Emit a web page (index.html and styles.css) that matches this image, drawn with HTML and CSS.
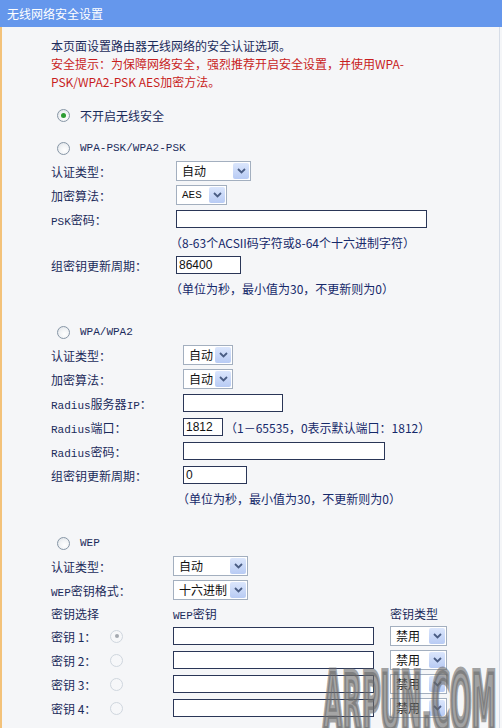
FILE: index.html
```html
<!DOCTYPE html>
<html lang="zh-CN">
<head>
<meta charset="utf-8">
<title>无线网络安全设置</title>
<link rel="stylesheet" href="styles.css">
</head>
<body>
<div class="title">无线网络安全设置</div>
<div class="panel">
  <div class="intro">
    <p>本页面设置路由器无线网络的安全认证选项。</p>
    <p class="warn">安全提示：为保障网络安全，强烈推荐开启安全设置，并使用WPA-<br>PSK/WPA2-PSK AES加密方法。</p>
  </div>

  <div class="option opt-first"><span class="radio checked"></span><span>不开启无线安全</span></div>
  <div class="option opt-second"><span class="radio"></span><span class="latin">WPA-PSK/WPA2-PSK</span></div>

  <div class="form form-psk">
    <div class="row"><span class="lbl">认证类型：</span>
      <span class="select w75"><span class="sel-text">自动</span><span class="sel-btn"><svg width="9" height="6" viewBox="0 0 9 6"><path d="M1 1 L4.5 4.5 L8 1" /></svg></span></span></div>
    <div class="row"><span class="lbl">加密算法：</span>
      <span class="select w51"><span class="sel-text latin">AES</span><span class="sel-btn"><svg width="9" height="6" viewBox="0 0 9 6"><path d="M1 1 L4.5 4.5 L8 1" /></svg></span></span></div>
    <div class="row"><span class="lbl"><span class="latin">PSK</span>密码：</span>
      <input class="field w251" type="text" value=""></div>
    <div class="hint">（8-63个ACSII码字符或8-64个十六进制字符）</div>
    <div class="row"><span class="lbl">组密钥更新周期：</span>
      <input class="field w65" type="text" value="86400"></div>
    <div class="hint">（单位为秒，最小值为30，不更新则为0）</div>
  </div>

  <div class="option opt-section"><span class="radio"></span><span class="latin">WPA/WPA2</span></div>

  <div class="form form-wpa">
    <div class="row"><span class="lbl">认证类型：</span>
      <span class="select w50"><span class="sel-text">自动</span><span class="sel-btn"><svg width="9" height="6" viewBox="0 0 9 6"><path d="M1 1 L4.5 4.5 L8 1" /></svg></span></span></div>
    <div class="row"><span class="lbl">加密算法：</span>
      <span class="select w50"><span class="sel-text">自动</span><span class="sel-btn"><svg width="9" height="6" viewBox="0 0 9 6"><path d="M1 1 L4.5 4.5 L8 1" /></svg></span></span></div>
    <div class="row"><span class="lbl"><span class="latin">Radius</span>服务器<span class="latin">IP</span>：</span>
      <input class="field w100" type="text" value=""></div>
    <div class="row"><span class="lbl"><span class="latin">Radius</span>端口：</span>
      <input class="field w40" type="text" value="1812"><span class="inline-hint">（1－65535，0表示默认端口：1812）</span></div>
    <div class="row"><span class="lbl"><span class="latin">Radius</span>密码：</span>
      <input class="field w202" type="text" value=""></div>
    <div class="row"><span class="lbl">组密钥更新周期：</span>
      <input class="field w64" type="text" value="0"></div>
    <div class="hint">（单位为秒，最小值为30，不更新则为0）</div>
  </div>

  <div class="option opt-wep"><span class="radio"></span><span class="latin">WEP</span></div>

  <div class="form form-wep">
    <div class="row"><span class="lbl">认证类型：</span>
      <span class="select w75"><span class="sel-text">自动</span><span class="sel-btn"><svg width="9" height="6" viewBox="0 0 9 6"><path d="M1 1 L4.5 4.5 L8 1" /></svg></span></span></div>
    <div class="row"><span class="lbl"><span class="latin">WEP</span>密钥格式：</span>
      <span class="select w75"><span class="sel-text">十六进制</span><span class="sel-btn"><svg width="9" height="6" viewBox="0 0 9 6"><path d="M1 1 L4.5 4.5 L8 1" /></svg></span></span></div>
    <div class="keyhead">
      <span class="lbl">密钥选择</span>
      <span class="kcol"><span class="latin">WEP</span>密钥</span>
      <span>密钥类型</span>
    </div>
    <div class="keyrow"><span class="klbl">密钥 1：</span><span class="radio dim checked-dim"></span>
      <input class="field w201" type="text" value=""><span class="select w57"><span class="sel-text">禁用</span><span class="sel-btn"><svg width="9" height="6" viewBox="0 0 9 6"><path d="M1 1 L4.5 4.5 L8 1" /></svg></span></span></div>
    <div class="keyrow"><span class="klbl">密钥 2：</span><span class="radio dim"></span>
      <input class="field w201" type="text" value=""><span class="select w57"><span class="sel-text">禁用</span><span class="sel-btn"><svg width="9" height="6" viewBox="0 0 9 6"><path d="M1 1 L4.5 4.5 L8 1" /></svg></span></span></div>
    <div class="keyrow"><span class="klbl">密钥 3：</span><span class="radio dim"></span>
      <input class="field w201" type="text" value=""><span class="select w57"><span class="sel-text">禁用</span><span class="sel-btn"><svg width="9" height="6" viewBox="0 0 9 6"><path d="M1 1 L4.5 4.5 L8 1" /></svg></span></span></div>
    <div class="keyrow"><span class="klbl">密钥 4：</span><span class="radio dim"></span>
      <input class="field w201" type="text" value=""><span class="select w57"><span class="sel-text">禁用</span><span class="sel-btn"><svg width="9" height="6" viewBox="0 0 9 6"><path d="M1 1 L4.5 4.5 L8 1" /></svg></span></span></div>
  </div>

  <div class="watermark">ARPUN.COM</div>
</div>
</body>
</html>
```

FILE: styles.css
```css
html, body {
  margin: 0;
  padding: 0;
}
body {
  font-family: "Noto Sans CJK SC", "Noto Sans", sans-serif;
  font-size: 12px;
  color: #1b2b5b;
  background: #f5f6f8;
  overflow: hidden;
}
.title {
  height: 27px;
  line-height: 27px;
  background: #6597ec;
  color: #fff;
  font-size: 12px;
  padding-left: 7px;
}
.panel {
  position: relative;
  width: 500px;
  box-sizing: border-box;
  min-height: 701px;
  border-left: 2px solid #f3c27a;
  border-right: 1px solid #d6dde8;
  padding-left: 49px;
  background: #f5f6f8;
}
.intro {
  padding-top: 10px;
}
.intro p {
  margin: 0;
  line-height: 18px;
}
.intro .warn {
  color: #c81e1e;
}
.latin {
  font-family: "Liberation Mono", "Noto Sans CJK SC", monospace;
  font-size: 11px;
}
.option {
  display: flex;
  align-items: center;
  height: 22px;
  padding-left: 6px;
  gap: 10px;
}
.opt-first { margin-top: 13px; }
.opt-second { margin-top: 11px; }
.opt-section { margin-top: 22px; }
.opt-wep { margin-top: 23px; }

.radio {
  width: 13px;
  height: 13px;
  box-sizing: border-box;
  border-radius: 50%;
  border: 1px solid #8796a6;
  background: radial-gradient(circle at 60% 65%, #ffffff 0%, #f1f3f5 50%, #d9dee4 100%);
  display: inline-flex;
  align-items: center;
  justify-content: center;
  flex: none;
}
.radio.checked::after {
  content: "";
  width: 5px;
  height: 5px;
  border-radius: 50%;
  background: #2c9c32;
}
.radio.dim {
  border-color: #cfd6de;
  background: #f6f7f9;
}
.radio.checked-dim::after {
  content: "";
  width: 4px;
  height: 4px;
  border-radius: 50%;
  background: #a4a9b0;
}

.form { display: flex; flex-direction: column; }
.form-psk { --lw: 125px; }
.form-wpa { --lw: 132px; }
.form-wep { --lw: 122px; }

.row {
  display: flex;
  align-items: center;
  height: 24px;
}
.lbl {
  width: var(--lw);
  flex: none;
  white-space: nowrap;
}
.hint {
  height: 22px;
  display: flex;
  align-items: center;
  padding-left: calc(var(--lw) - 6px);
  color: #15296a;
  white-space: nowrap;
}
.inline-hint {
  margin-left: 2px;
  color: #15296a;
  white-space: nowrap;
}

.select {
  display: inline-flex;
  height: 20px;
  box-sizing: border-box;
  border: 1px solid #a3afbf;
  background: #fff;
  flex: none;
}
.sel-text {
  flex: 1;
  padding-left: 5px;
  line-height: 18px;
  color: #111;
  white-space: nowrap;
  overflow: hidden;
}
.sel-text.latin { font-size: 11px; }
.sel-btn {
  width: 16px;
  margin: 1px;
  border-radius: 2px;
  background: linear-gradient(#dbe6fc, #b8cbf4);
  display: flex;
  align-items: center;
  justify-content: center;
}
.sel-btn svg path {
  fill: none;
  stroke: #4a5d84;
  stroke-width: 1.8;
}
.w75 { width: 75px; }
.w51 { width: 51px; }
.w50 { width: 50px; }
.w57 { width: 57px; }

.field {
  height: 18px;
  box-sizing: border-box;
  border: 1px solid #2a3657;
  background: #fff;
  margin: 0;
  padding: 0 2px;
  font-family: "Liberation Sans", sans-serif;
  font-size: 12px;
  color: #111;
  outline: none;
  flex: none;
}
.w251 { width: 251px; }
.w65 { width: 65px; }
.w100 { width: 100px; }
.w40 { width: 40px; }
.w202 { width: 202px; }
.w64 { width: 64px; }
.w201 { width: 201px; }

.keyhead {
  display: flex;
  align-items: center;
  height: 22px;
  white-space: nowrap;
}
.kcol { width: 217px; flex: none; }
.keyrow {
  display: flex;
  align-items: center;
  height: 24px;
}
.klbl {
  width: 59px;
  flex: none;
  white-space: nowrap;
}
.keyrow .radio { margin-right: 50px; }
.keyrow .select { margin-left: 16px; }

.watermark {
  position: absolute;
  left: 321px;
  top: 636px;
  font-family: "Liberation Sans Narrow", "DejaVu Sans Condensed", sans-serif;
  font-weight: bold;
  font-size: 80px;
  line-height: 1;
  color: rgba(105, 105, 105, 0.6);
  -webkit-text-stroke: 7px rgba(105, 105, 105, 0.6);
  paint-order: stroke fill;
  transform: scaleX(0.35);
  transform-origin: left top;
  pointer-events: none;
  white-space: nowrap;
}
```
